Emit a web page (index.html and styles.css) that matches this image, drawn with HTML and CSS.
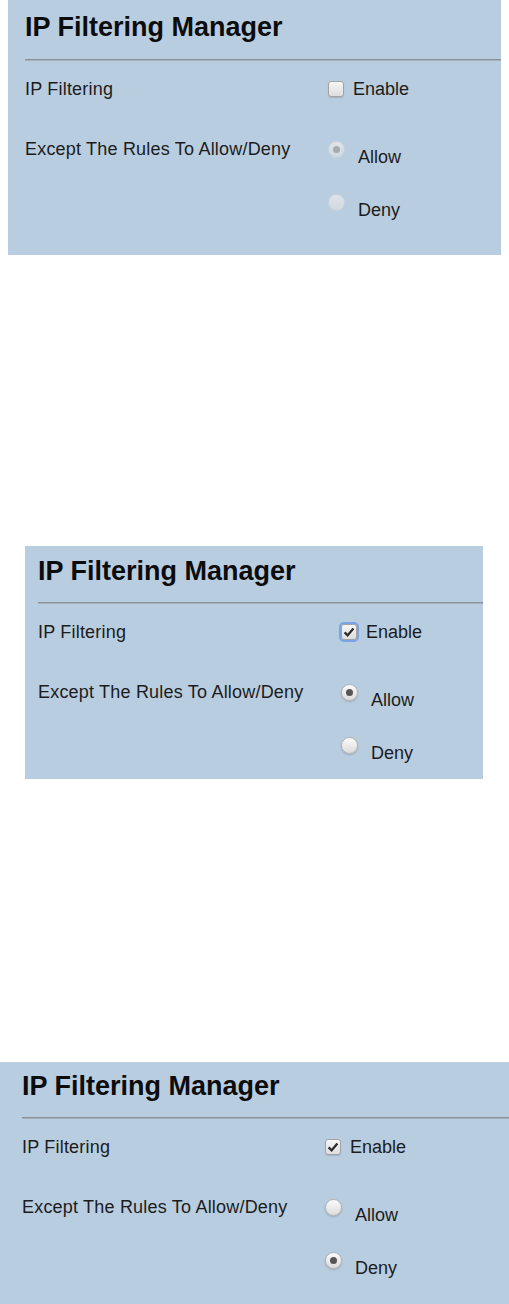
FILE: index.html
```html
<!DOCTYPE html>
<html lang="en">

<head>
    <meta charset="UTF-8">
    <meta name="viewport" content="width=device-width, initial-scale=1.0">
    <title>IP Filtering Manager</title>
    <link rel="stylesheet" href="styles.css">
</head>

<body>
    <!-- state 1: filtering off, rule options greyed out -->
    <div class="panel panel-a">
        <h2 class="title">IP Filtering Manager</h2>
        <hr class="rule">
        <div class="row">
            <div class="row-label">IP Filtering</div>
            <div class="control">
                <span class="box"></span>
                <span class="box-text">Enable</span>
            </div>
        </div>
        <div class="row row-radios">
            <div class="row-label">Except The Rules To Allow/Deny</div>
            <div class="options">
                <div class="option">
                    <span class="radio radio-off on"></span>
                    <span class="option-text">Allow</span>
                </div>
                <div class="option">
                    <span class="radio radio-off"></span>
                    <span class="option-text">Deny</span>
                </div>
            </div>
        </div>
    </div>

    <!-- state 2: filtering on, allow selected -->
    <div class="panel panel-b">
        <h2 class="title">IP Filtering Manager</h2>
        <hr class="rule">
        <div class="row">
            <div class="row-label">IP Filtering</div>
            <div class="control">
                <span class="box checked focus">
                    <svg width="12" height="12" viewBox="0 0 12 12"><path d="M1.6 6.4 L4.6 9.4 L10.4 2.4" fill="none" stroke="#2c2c2c" stroke-width="2.3"/></svg>
                </span>
                <span class="box-text">Enable</span>
            </div>
        </div>
        <div class="row row-radios">
            <div class="row-label">Except The Rules To Allow/Deny</div>
            <div class="options">
                <div class="option">
                    <span class="radio on"></span>
                    <span class="option-text">Allow</span>
                </div>
                <div class="option">
                    <span class="radio"></span>
                    <span class="option-text">Deny</span>
                </div>
            </div>
        </div>
    </div>

    <!-- state 3: filtering on, deny selected -->
    <div class="panel panel-c">
        <h2 class="title">IP Filtering Manager</h2>
        <hr class="rule">
        <div class="row">
            <div class="row-label">IP Filtering</div>
            <div class="control">
                <span class="box checked">
                    <svg width="12" height="12" viewBox="0 0 12 12"><path d="M1.6 6.4 L4.6 9.4 L10.4 2.4" fill="none" stroke="#2c2c2c" stroke-width="2.3"/></svg>
                </span>
                <span class="box-text">Enable</span>
            </div>
        </div>
        <div class="row row-radios">
            <div class="row-label">Except The Rules To Allow/Deny</div>
            <div class="options">
                <div class="option">
                    <span class="radio"></span>
                    <span class="option-text">Allow</span>
                </div>
                <div class="option">
                    <span class="radio on"></span>
                    <span class="option-text">Deny</span>
                </div>
            </div>
        </div>
    </div>
</body>

</html>
```

FILE: styles.css
```css
body {
    margin: 0;
    font-family: "Liberation Sans", Arial, sans-serif;
    font-size: 18px;
    line-height: 20px;
    color: #1c1c1c;
    background: #fff;
}

.panel {
    box-sizing: border-box;
    background-color: #b9cde0;
    overflow: hidden;
}

.panel-a {
    margin-left: 8px;
    width: 493px;
    height: 255px;
    padding: 12px 0 0 17px;
}

.panel-b {
    margin: 291px 0 0 25px;
    width: 458px;
    height: 233px;
    padding: 10px 0 0 13px;
}

.panel-c {
    margin-top: 283px;
    width: 509px;
    height: 242px;
    padding: 9px 0 0 22px;
}

.title {
    margin: 0;
    font-size: 27px;
    line-height: 30px;
    font-weight: bold;
    color: #0c0c0c;
}

.rule {
    margin: 17px 0 0 0;
    border: 0;
    height: 0;
    border-top: 1px solid #8b9096;
    border-bottom: 1px solid #a4b2c0;
}

.panel-b .rule,
.panel-c .rule {
    margin-top: 16px;
}

.row {
    display: flex;
    margin-top: 18px;
}

.row-radios {
    margin-top: 40px;
}

.row-label {
    width: 303px;
    flex-shrink: 0;
    letter-spacing: 0.2px;
}

.control {
    display: flex;
    align-items: flex-start;
}

.box {
    box-sizing: border-box;
    width: 16px;
    height: 16px;
    margin-top: 2px;
    border: 1px solid #a3a3a3;
    border-radius: 3px;
    background: linear-gradient(#f6f6f6, #dedede);
    box-shadow: 0 1px 1px rgba(0, 0, 0, 0.12);
    display: flex;
    align-items: center;
    justify-content: center;
}

.box.focus {
    box-shadow: 0 0 0 2px #7aa3e4;
}

.box-text {
    margin-left: 9px;
}

.options {
    display: flex;
    flex-direction: column;
    gap: 25px;
}

.option {
    display: flex;
    align-items: flex-start;
}

.radio {
    position: relative;
    box-sizing: border-box;
    width: 17px;
    height: 17px;
    margin-top: 2px;
    border-radius: 50%;
    border: 1px solid #b4b4b4;
    background: linear-gradient(#fbfbfb, #dcdcdc);
    box-shadow: 0 1px 2px rgba(0, 0, 0, 0.18);
}

.radio.on::after {
    content: "";
    position: absolute;
    left: 4px;
    top: 4px;
    width: 7px;
    height: 7px;
    border-radius: 50%;
    background: #555;
}

.radio-off {
    border-color: #c9d3dc;
    background: linear-gradient(#dfe5ea, #cfd8e0);
    box-shadow: none;
}

.radio-off.on::after {
    background: #a6abb0;
}

.option-text {
    margin: 8px 0 0 13px;
}
```
